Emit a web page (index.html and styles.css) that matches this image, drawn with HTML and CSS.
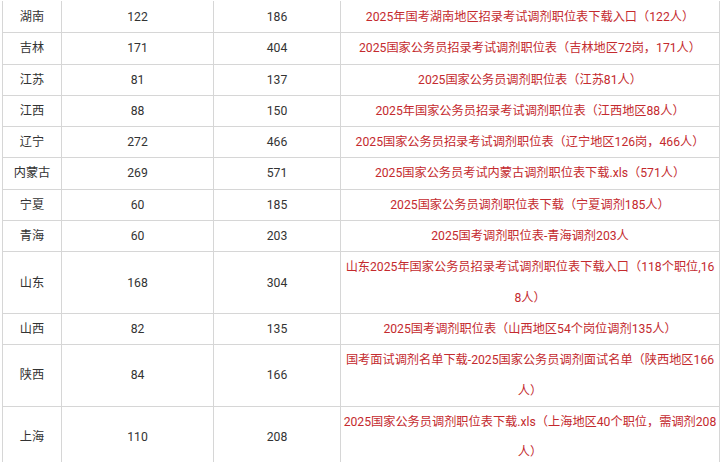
FILE: index.html
```html
<!DOCTYPE html>
<html lang="zh-CN">
<head>
<meta charset="utf-8">
<title>2025国考调剂职位表</title>
<link rel="stylesheet" href="styles.css">
</head>
<body>
<table class="tbl">
  <colgroup>
    <col class="c-prov">
    <col class="c-num">
    <col class="c-num2">
    <col class="c-link">
  </colgroup>
  <tbody>
    <tr><td>湖南</td><td>122</td><td>186</td><td><a href="#">2025年国考湖南地区招录考试调剂职位表下载入口（122人）</a></td></tr>
    <tr><td>吉林</td><td>171</td><td>404</td><td><a href="#">2025国家公务员招录考试调剂职位表（吉林地区72岗，171人）</a></td></tr>
    <tr><td>江苏</td><td>81</td><td>137</td><td><a href="#">2025国家公务员调剂职位表（江苏81人）</a></td></tr>
    <tr><td>江西</td><td>88</td><td>150</td><td><a href="#">2025年国家公务员招录考试调剂职位表（江西地区88人）</a></td></tr>
    <tr><td>辽宁</td><td>272</td><td>466</td><td><a href="#">2025国家公务员招录考试调剂职位表（辽宁地区126岗，466人）</a></td></tr>
    <tr><td>内蒙古</td><td>269</td><td>571</td><td><a href="#">2025国家公务员考试内蒙古调剂职位表下载.xls（571人）</a></td></tr>
    <tr><td>宁夏</td><td>60</td><td>185</td><td><a href="#">2025国家公务员调剂职位表下载（宁夏调剂185人）</a></td></tr>
    <tr><td>青海</td><td>60</td><td>203</td><td><a href="#">2025国考调剂职位表-青海调剂203人</a></td></tr>
    <tr><td>山东</td><td>168</td><td>304</td><td><a href="#">山东2025年国家公务员招录考试调剂职位表下载入口（118个职位,168人）</a></td></tr>
    <tr><td>山西</td><td>82</td><td>135</td><td><a href="#">2025国考调剂职位表（山西地区54个岗位调剂135人）</a></td></tr>
    <tr><td>陕西</td><td>84</td><td>166</td><td><a href="#">国考面试调剂名单下载-2025国家公务员调剂面试名单（陕西地区166人）</a></td></tr>
    <tr><td>上海</td><td>110</td><td>208</td><td><a href="#">2025国家公务员调剂职位表下载.xls（上海地区40个职位，需调剂208人）</a></td></tr>
  </tbody>
</table>
</body>
</html>
```
FILE: styles.css
```css
html, body {
  margin: 0;
  padding: 0;
  background: #ffffff;
}

body {
  font-family: Roboto, "Noto Sans CJK SC", sans-serif;
  font-size: 12.2px;
  color: #333333;
}

.tbl {
  margin: 1px 0 0 2px;
  width: 717px;
  border-collapse: collapse;
  table-layout: fixed;
}

.c-prov { width: 59px; }
.c-num { width: 152px; }
.c-num2 { width: 127px; }
.c-link { width: 379px; }

.tbl td {
  border: 1px solid #d6d6d6;
  padding: 0 2px;
  line-height: 30.3px;
  text-align: center;
  vertical-align: middle;
  word-break: break-all;
  text-spacing-trim: space-all;
}

.tbl tr:first-child td {
  border-top-color: transparent;
}

.tbl a {
  color: #c42a2e;
  text-decoration: none;
}
```
